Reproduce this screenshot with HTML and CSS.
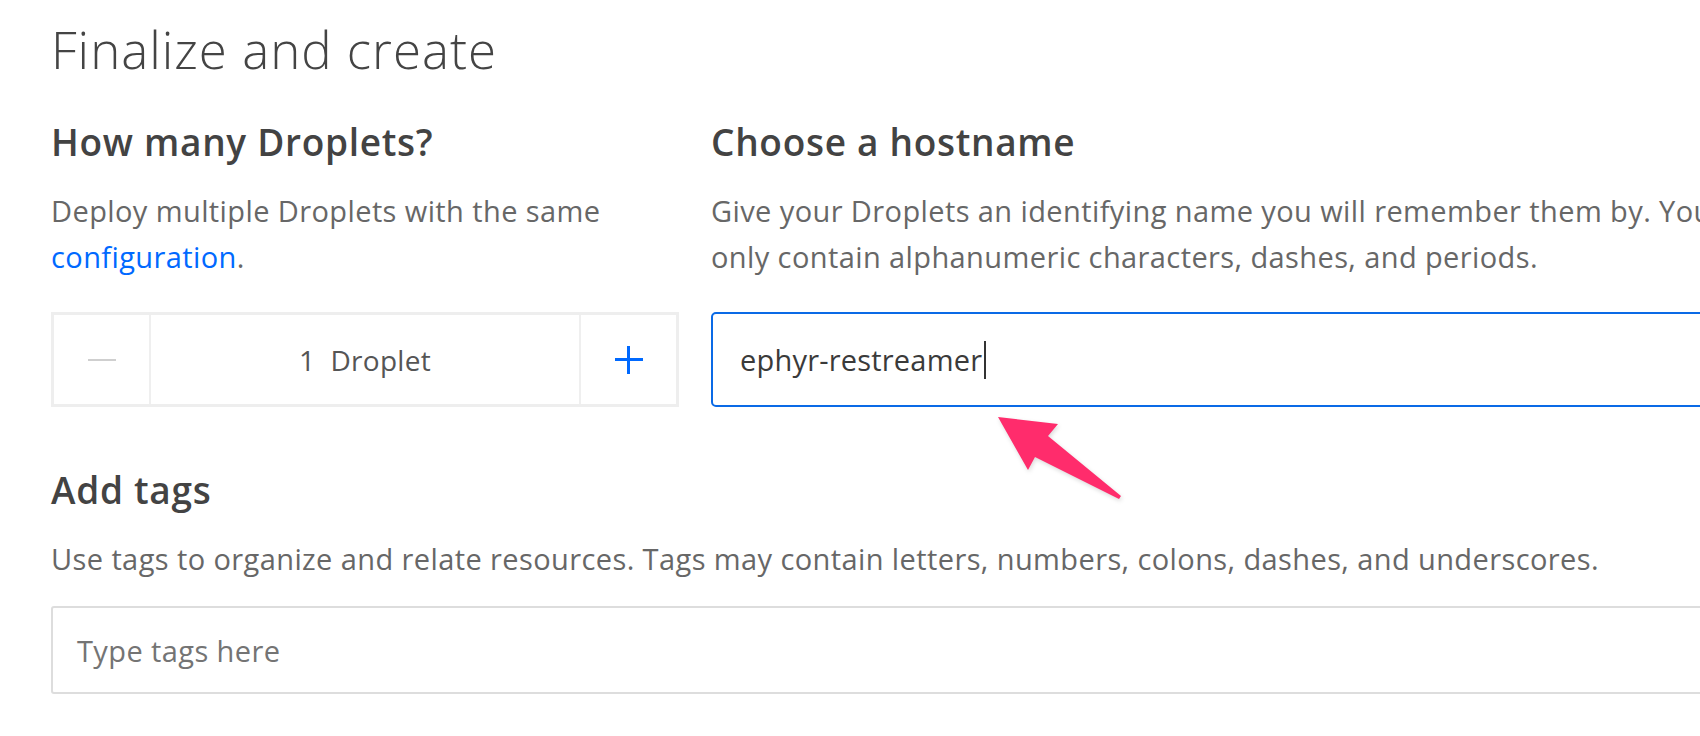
FILE: index.html
```html
<!DOCTYPE html>
<html>
<head>
<meta charset="utf-8">
<link rel="stylesheet" href="styles.css">
</head>
<body>
<div class="page">
  <h1 class="title">Finalize and create</h1>
  <div class="cols">
    <section class="col col-left">
      <h2 class="heading">How many Droplets?</h2>
      <p class="desc">Deploy multiple Droplets with the same <a class="link">configuration</a>.</p>
      <div class="stepper">
        <div class="step-btn step-minus"><span class="minus"></span></div>
        <div class="step-value">1&nbsp; Droplet</div>
        <div class="step-btn step-plus"><span class="plus"></span></div>
      </div>
    </section>
    <section class="col col-right">
      <h2 class="heading">Choose a hostname</h2>
      <p class="desc desc-nowrap">Give your Droplets an identifying name you will remember them by. Your Droplet name can<br>only contain alphanumeric characters, dashes, and periods.</p>
      <div class="field field-active"><span class="field-text">ephyr-restreamer</span><span class="caret"></span></div>
    </section>
  </div>
  <section class="tags">
    <h2 class="heading">Add tags</h2>
    <p class="desc">Use tags to organize and relate resources. Tags may contain letters, numbers, colons, dashes, and underscores.</p>
    <div class="field field-tags"><span class="placeholder">Type tags here</span></div>
  </section>
  <svg class="arrow" width="140" height="100" viewBox="0 0 140 100">
    <polygon points="8,7 68,14 58,26 131,86 129,89 45,47 38,60" fill="#ff2c6c"/>
  </svg>
</div>
</body>
</html>
```

FILE: styles.css
```css
html, body {
  margin: 0;
  padding: 0;
  background: #ffffff;
  overflow: hidden;
}
body {
  width: 1700px;
  height: 736px;
  font-family: "Open Sans", "Lato", sans-serif;
  color: #444;
}
.page {
  position: relative;
  padding-left: 51px;
  width: 2200px;
  height: 736px;
}
.title {
  margin: 0;
  padding-top: 19px;
  font-size: 51px;
  line-height: 60px;
  font-weight: 300;
  color: #444;
  letter-spacing: 1px;
}
.cols {
  display: grid;
  grid-template-columns: 627px 1100px;
  column-gap: 33px;
  margin-top: 43px;
}
.heading {
  margin: 0;
  font-size: 37px;
  line-height: 40px;
  font-weight: 600;
  color: #434343;
  letter-spacing: 0.7px;
}
.desc {
  margin: 26px 0 0;
  font-size: 29px;
  line-height: 46px;
  color: #676767;
  letter-spacing: 0.4px;
}
.desc-nowrap {
  white-space: nowrap;
}
.link {
  color: #0069ff;
  text-decoration: none;
}
.stepper {
  margin-top: 32px;
  height: 89px;
  border: 3px solid #eeeeee;
  display: flex;
  box-sizing: content-box;
  width: 622px;
}
.step-btn {
  width: 95px;
  display: flex;
  align-items: center;
  justify-content: center;
}
.step-minus {
  border-right: 2px solid #efefef;
}
.step-plus {
  border-left: 2px solid #efefef;
}
.minus {
  display: block;
  width: 28px;
  height: 2px;
  background: #cfcfcf;
}
.plus {
  position: relative;
  display: block;
  width: 28px;
  height: 28px;
}
.plus::before, .plus::after {
  content: "";
  position: absolute;
  background: #0069ff;
}
.plus::before {
  left: 0;
  top: 12.5px;
  width: 28px;
  height: 3px;
}
.plus::after {
  top: 0;
  left: 12.5px;
  width: 3px;
  height: 28px;
}
.step-value {
  flex: 1;
  display: flex;
  align-items: center;
  justify-content: center;
  font-size: 28px;
  letter-spacing: 0.3px;
  color: #555;
}
.field {
  box-sizing: border-box;
  display: flex;
  align-items: center;
  font-size: 29px;
  letter-spacing: 0.2px;
}
.field-active {
  margin-top: 32px;
  height: 95px;
  border: 2px solid #0a6ae6;
  border-radius: 5px;
  padding-left: 27px;
  color: #3a3a3a;
}
.caret {
  display: inline-block;
  width: 2px;
  height: 38px;
  background: #333;
  margin-left: 2px;
}
.tags {
  margin-top: 63px;
}
.field-tags {
  margin-top: 24px;
  height: 88px;
  width: 1800px;
  border: 2px solid #dddddd;
  border-radius: 3px;
  padding-left: 24px;
  letter-spacing: 0.4px;
}
.placeholder {
  color: #747474;
}
.arrow {
  position: absolute;
  left: 990px;
  top: 410px;
  filter: drop-shadow(1px 2px 2px rgba(0,0,0,0.15));
}
```
